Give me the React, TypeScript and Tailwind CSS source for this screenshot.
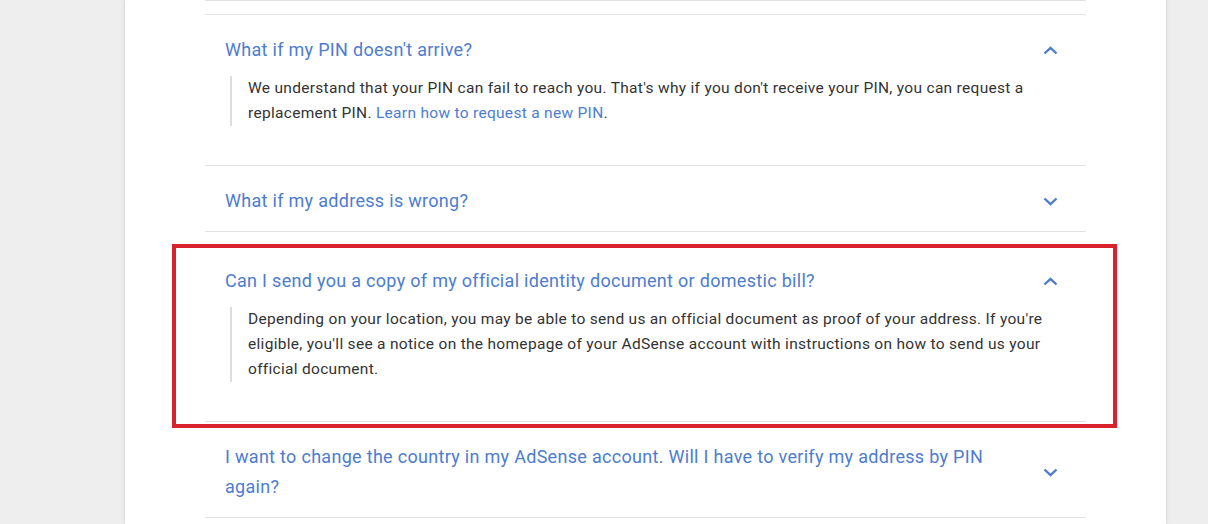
import type { ReactNode } from 'react';

type FaqItem = {
  question: string;
  open: boolean;
  answer?: ReactNode;
  extraTop?: boolean;
  highlighted?: boolean;
};

const items: FaqItem[] = [
  {
    question: "What if my PIN doesn't arrive?",
    open: true,
    answer: (
      <>
        We understand that your PIN can fail to reach you. That's why if you don't receive your PIN, you can
        request a replacement PIN.{' '}
        <a href="#" className="text-[#4d7cd0]">
          Learn how to request a new PIN
        </a>
        .
      </>
    ),
  },
  {
    question: 'What if my address is wrong?',
    open: false,
  },
  {
    question: 'Can I send you a copy of my official identity document or domestic bill?',
    open: true,
    extraTop: true,
    highlighted: true,
    answer: (
      <>
        Depending on your location, you may be able to send us an official document as proof of your address. If
        you're eligible, you'll see a notice on the homepage of your AdSense account with instructions on how to
        send us your official document.
      </>
    ),
  },
  {
    question: 'I want to change the country in my AdSense account. Will I have to verify my address by PIN again?',
    open: false,
  },
];

function Chevron({ up }: { up: boolean }) {
  return (
    <svg width="15" height="9" viewBox="0 0 15 9" className="shrink-0">
      <path
        d={up ? 'M1.5 7.5 L7.5 1.8 L13.5 7.5' : 'M1.5 1.5 L7.5 7.2 L13.5 1.5'}
        fill="none"
        stroke="#4d7cd0"
        strokeWidth="2.4"
      />
    </svg>
  );
}

function FaqRow({ item }: { item: FaqItem }) {
  return (
    <div className="relative border-b border-[#e2e2e2]">
      {item.highlighted && (
        <div className="pointer-events-none absolute -left-[33px] -right-[31px] top-[12px] -bottom-[7px] border-4 border-[#d8222b]" />
      )}
      <div className={`${item.extraTop ? 'pt-[34px]' : 'pt-[20px]'} ${item.open ? 'pb-[39px]' : 'pb-[15px]'}`}>
        <div className="flex items-center gap-6 pl-[20px] pr-[28px]">
          <div className="flex-1 text-[18px] leading-[30px] tracking-[0.3px] text-[#4d7cd0]">{item.question}</div>
          <Chevron up={item.open} />
        </div>
        {item.open && item.answer && (
          <div className="ml-[25px] mr-[25px] mt-[11px] border-l-2 border-[#dddddd] pl-[16px] text-[15.5px] leading-[25px] tracking-[0.3px] text-[#333333]">
            {item.answer}
          </div>
        )}
      </div>
    </div>
  );
}

export default function App() {
  return (
    <div
      className="h-[524px] w-[1208px] overflow-hidden bg-[#eeeeee]"
      style={{ fontFamily: 'Roboto, "Noto Sans", sans-serif' }}
    >
      <div className="ml-[125px] h-full w-[1041px] bg-white px-[80px] shadow-[0_0_3px_rgba(0,0,0,0.18)]">
        <div className="h-px bg-[#e2e2e2]" />
        <div className="mt-[13px] border-t border-[#e2e2e2]">
          {items.map((item) => (
            <FaqRow key={item.question} item={item} />
          ))}
        </div>
      </div>
    </div>
  );
}
